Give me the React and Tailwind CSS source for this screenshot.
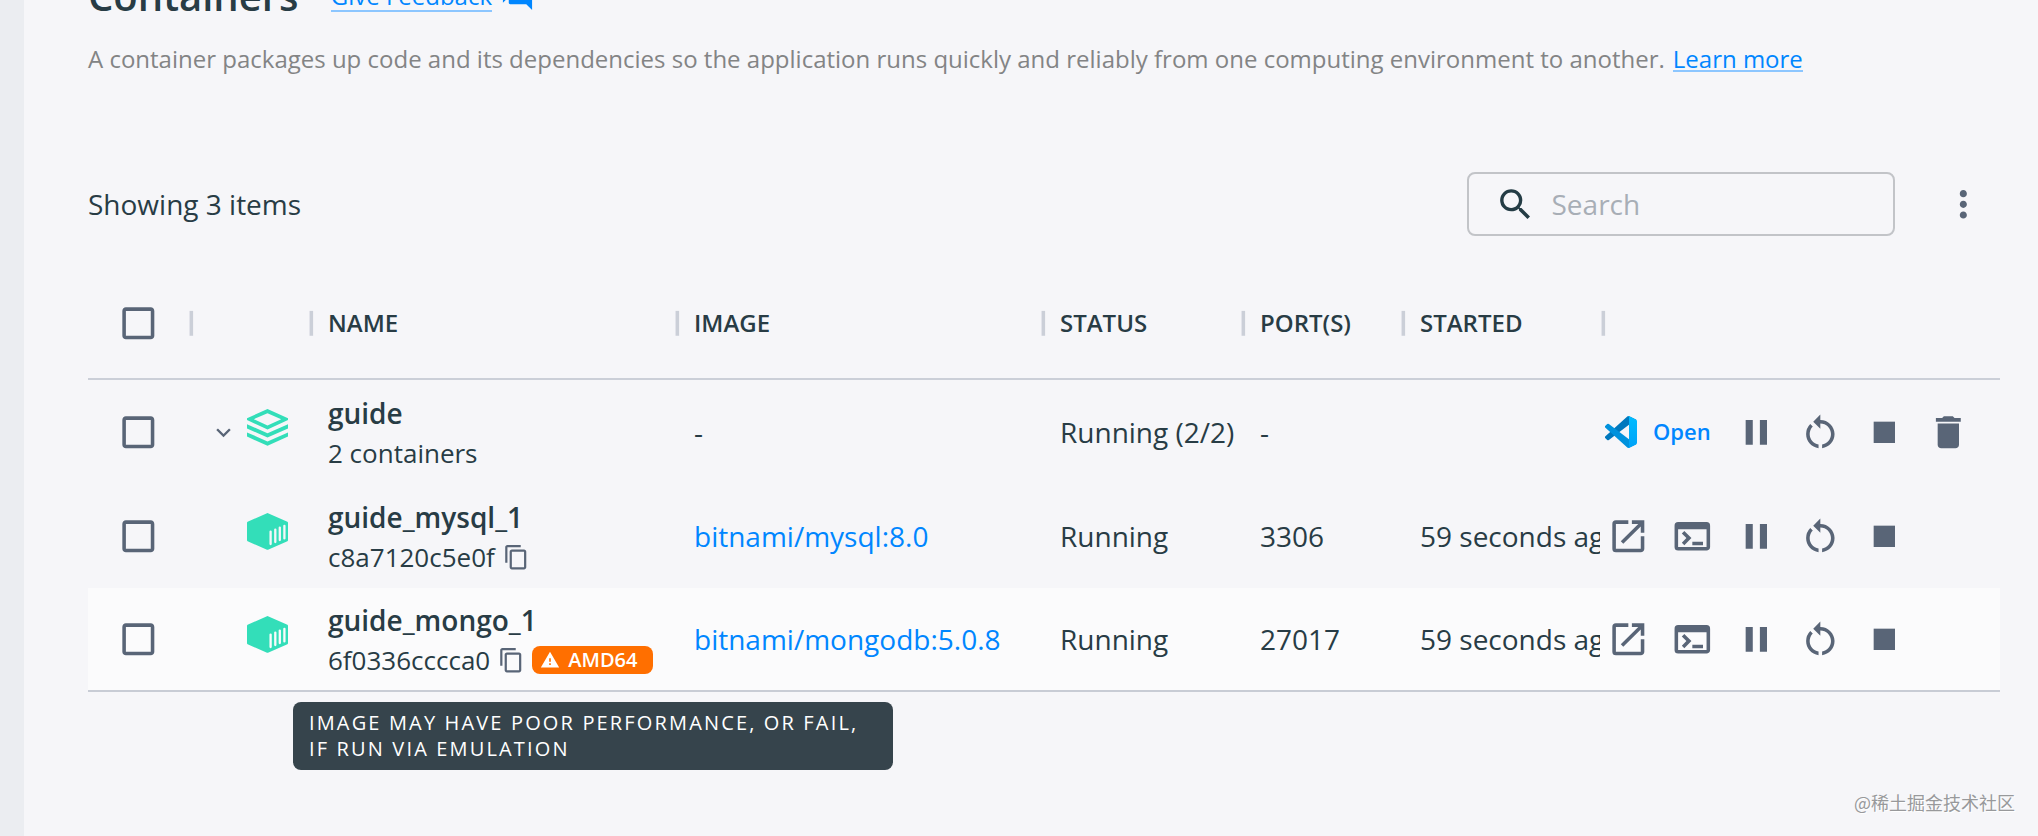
import {
  MdCheckBoxOutlineBlank,
  MdContentCopy,
  MdDelete,
  MdExpandMore,
  MdForum,
  MdMoreVert,
  MdOpenInNew,
  MdPause,
  MdRestartAlt,
  MdSearch,
  MdStop,
  MdTerminal,
  MdWarning,
} from "react-icons/md";

const GRID =
  "grid grid-cols-[104px_120px_366px_366px_200px_160px_200px_396px] items-center";
const ICON = "size-[42.67px] shrink-0 text-[#596577]";

function Separator() {
  return (
    <svg viewBox="0 0 24 24" className="-mr-[20.83px] size-[42.67px] shrink-0 fill-[#cbcfd8]">
      <path d="M11 19V5h2v14z" />
    </svg>
  );
}

function StackIcon() {
  return (
    <svg viewBox="0 0 41 37" className="h-[37px] w-[41px] fill-[#33deb9]">
      <path
        fillRule="evenodd"
        d="M20.5 0 41 9.2v1.8L20.5 20.5 0 11V9.2zM20.5 4.3 6.8 10.2l13.7 6.2 13.7-6.2z"
      />
      <path d="M0 15.3 20.5 24.3 41 15.3v4.2L20.5 28.6 0 19.5z" />
      <path d="M0 23.4 20.5 32.4 41 23.4v4.2L20.5 36.8 0 27.6z" />
    </svg>
  );
}

function ContainerIcon({ hole }) {
  return (
    <svg viewBox="0 0 41 37" className="h-[37px] w-[41px]">
      <path
        fill="#33deb9"
        d="M20 .2a1.2 1.2 0 0 1 1 0L40.4 8.8q.6.3.6.9v17.6q0 .6-.6.9L21 36.7a1.2 1.2 0 0 1-1 0L.6 28.2q-.6-.3-.6-.9V9.7q0-.6.6-.9z"
      />
      <g stroke={hole} strokeWidth="2.3" strokeLinecap="round">
        <path d="M23.6 18.6v12.5M28.3 16.6v12.5M32.8 14.6v12.5M37.4 12.8v12.6" />
      </g>
    </svg>
  );
}

function VsCodeIcon() {
  return (
    <svg viewBox="0 0 100 100" className="size-8 shrink-0">
      <defs>
        <linearGradient id="vsc-bar" x1="0" y1="0" x2="0" y2="1">
          <stop offset="0" stopColor="#00bcff" />
          <stop offset="1" stopColor="#00a2f8" />
        </linearGradient>
      </defs>
      <path
        fill="#0078bd"
        d="M96.46 10.8 75.86.88a6.23 6.23 0 0 0-7.11 1.2L1.3 63.58a4.17 4.17 0 0 0 0 6.17l5.51 5a4.17 4.17 0 0 0 5.32.24l81.23-61.62c2.73-2.07 6.64-.12 6.64 3.3v-.24a6.25 6.25 0 0 0-3.54-5.63z"
      />
      <path
        fill="#0092dd"
        d="m96.46 89.2-20.6 9.92a6.23 6.23 0 0 1-7.11-1.2L1.3 36.42a4.17 4.17 0 0 1 0-6.17l5.51-5a4.17 4.17 0 0 1 5.32-.24l81.23 61.62c2.73 2.07 6.64.12 6.64-3.3v.24a6.25 6.25 0 0 1-3.54 5.63z"
      />
      <path
        fill="url(#vsc-bar)"
        d="M75.86 99.13a6.23 6.23 0 0 1-7.11-1.21c2.31 2.3 6.25.67 6.25-2.59V4.67c0-3.26-3.94-4.9-6.25-2.59A6.23 6.23 0 0 1 75.86.87l20.6 9.91A6.25 6.25 0 0 1 100 16.41v67.18a6.25 6.25 0 0 1-3.54 5.63z"
      />
    </svg>
  );
}

function Checkbox() {
  return (
    <div className="pl-[28.67px]">
      <MdCheckBoxOutlineBlank className={ICON} />
    </div>
  );
}

function HeaderCell({ children }) {
  return (
    <div className="flex h-[42.67px] items-center justify-between">
      <span className="pl-4">{children}</span>
      <Separator />
    </div>
  );
}

function Actions({ group }) {
  if (group) {
    return (
      <div className="flex items-center pl-px">
        <VsCodeIcon />
        <span className="-mt-0.5 ml-4 w-[81.67px] text-[22px] font-semibold text-[#0086ff]">
          Open
        </span>
        <div className="flex items-center gap-[21.33px]">
          <MdPause className={ICON} />
          <MdRestartAlt className={ICON} />
          <MdStop className={ICON} />
          <MdDelete className={ICON} />
        </div>
      </div>
    );
  }
  return (
    <div className="flex items-center gap-[21.33px] pl-[2.67px]">
      <MdOpenInNew className={ICON} />
      <MdTerminal className={ICON} />
      <MdPause className={ICON} />
      <MdRestartAlt className={ICON} />
      <MdStop className={ICON} />
    </div>
  );
}

function Row({ name, detail, image, status, ports, started, group, hovered, amd64 }) {
  return (
    <div className={`${GRID} h-[104px] ${hovered ? "border-b-2 border-[#c8ccd5] bg-[#fbfbfc]" : ""}`}>
      <Checkbox />
      <div className="flex items-center justify-end pr-6">
        {group && <MdExpandMore className="mt-px mr-[9.5px] size-[29px] text-[#596577]" />}
        <div className="-mt-[9px]">
          {group ? <StackIcon /> : <ContainerIcon hole={hovered ? "#fbfbfc" : "#f6f6f9"} />}
        </div>
      </div>
      <div className="pt-0.5 pl-4">
        <div className="h-10 text-[28px] leading-10 font-semibold">{name}</div>
        <div className="flex h-10 items-center text-[26px] leading-10">
          <span>{detail}</span>
          {!group && <MdContentCopy className="ml-[8px] size-[26.6px] text-[#596577]" />}
          {amd64 && (
            <span className="ml-[7.5px] flex h-7 w-[121px] items-center rounded-lg bg-[#ff6f00] pl-2 text-xl leading-7 font-semibold text-white">
              <MdWarning className="mr-2 size-5" />
              AMD64
            </span>
          )}
        </div>
      </div>
      <div className={`pl-4 ${group ? "" : "text-[#0086ff]"}`}>{image}</div>
      <div className="pl-4 whitespace-nowrap">{status}</div>
      <div className="pl-4">{ports}</div>
      <div className="mr-1 ml-4 overflow-hidden whitespace-nowrap">{started}</div>
      <Actions group={group} />
    </div>
  );
}

export default function App() {
  return (
    <div className="flex h-[836px] w-[2038px] overflow-hidden bg-[#f6f6f9] font-['Open_Sans','Noto_Sans_CJK_SC',sans-serif] text-[28px] text-[#283c45]">
      <div className="w-6 shrink-0 bg-[#ebedf1]" />
      <main className="relative w-[2014px] pl-16">
        <header className="-mt-8 flex h-[55px] items-center">
          <h1 className="w-[242.7px] text-[40px] leading-[55px] font-semibold">Containers</h1>
          <a className="mt-[3px] h-[29px] border-b-2 border-[#8cc6ff] text-2xl leading-[26px] text-[#0086ff]">
            Give Feedback
          </a>
          <MdForum className="ml-[7.5px] size-[35px] text-[#0086ff]" />
        </header>

        <p className="mt-[19px] flex h-[33px] text-2xl leading-[33px] whitespace-nowrap text-[#838485]">
          <span className="w-[1584.8px]">
            A container packages up code and its dependencies so the application runs quickly and
            reliably from one computing environment to another.
          </span>
          <a className="h-[30px] border-b-2 border-[#8cc6ff] text-[#0086ff]">Learn more</a>
        </p>

        <div className="mt-[97px] flex h-16 items-center">
          <span className="w-[1379px]">Showing 3 items</span>
          <div className="flex h-16 w-[428px] items-center rounded-lg border-2 border-[#c2c4c8] pl-[26px]">
            <MdSearch className="size-[41px] text-[#243c45]" />
            <span className="ml-[15.5px] text-[#a8aeb6]">Search</span>
          </div>
          <MdMoreVert className="ml-[47px] size-[42.67px] text-[#596577]" />
        </div>

        <section className="mt-8 w-[1912px]">
          <div className={`${GRID} h-28 border-b-2 border-[#cbcfd8] text-2xl font-semibold`}>
            <div className="flex items-center justify-between">
              <Checkbox />
              <Separator />
            </div>
            <HeaderCell />
            <HeaderCell>NAME</HeaderCell>
            <HeaderCell>IMAGE</HeaderCell>
            <HeaderCell>STATUS</HeaderCell>
            <HeaderCell>PORT(S)</HeaderCell>
            <HeaderCell>STARTED</HeaderCell>
          </div>
          <Row group name="guide" detail="2 containers" image="-" status="Running (2/2)" ports="-" />
          <Row
            name="guide_mysql_1"
            detail="c8a7120c5e0f"
            image="bitnami/mysql:8.0"
            status="Running"
            ports="3306"
            started="59 seconds ago"
          />
          <Row
            hovered
            amd64
            name="guide_mongo_1"
            detail="6f0336cccca0"
            image="bitnami/mongodb:5.0.8"
            status="Running"
            ports="27017"
            started="59 seconds ago"
          />
        </section>

        <div className="absolute top-[702px] left-[269px] h-[68px] w-[600px] rounded-lg bg-[#36444c] px-4 py-2 text-xl leading-[26px] tracking-[2.15px] text-white">
          IMAGE MAY HAVE POOR PERFORMANCE, OR FAIL,
          <br />
          IF RUN VIA EMULATION
        </div>

        <div className="absolute top-[789px] right-[23px] font-['Noto_Sans_CJK_SC',sans-serif] text-lg leading-[26px] text-[#98999b] [text-shadow:1px_1px_0_#fff]">
          @稀土掘金技术社区
        </div>
      </main>
    </div>
  );
}
